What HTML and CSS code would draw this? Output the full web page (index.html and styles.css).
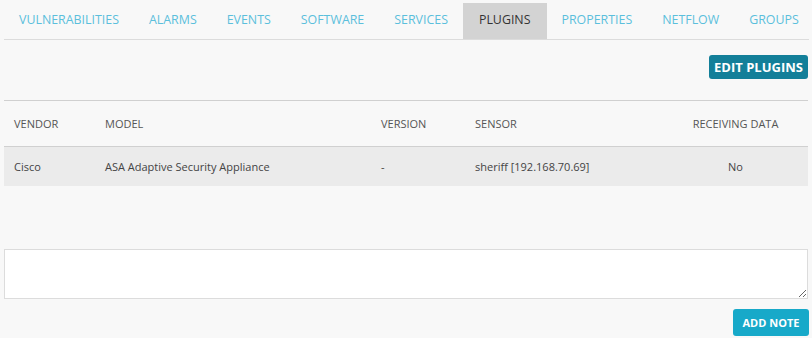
FILE: index.html
```html
<!DOCTYPE html>
<html lang="en">
<head>
    <meta charset="UTF-8">
    <title>Asset | Plugins</title>
    <link rel="stylesheet" href="styles.css">
</head>
<body>
    <nav class="tabs">
        <a href="#">Vulnerabilities</a>
        <a href="#">Alarms</a>
        <a href="#">Events</a>
        <a href="#">Software</a>
        <a href="#">Services</a>
        <a href="#" class="active">Plugins</a>
        <a href="#">Properties</a>
        <a href="#">Netflow</a>
        <a href="#">Groups</a>
    </nav>

    <div class="toolbar">
        <button class="btn btn-dark">Edit Plugins</button>
    </div>

    <table class="plugins">
        <thead>
            <tr>
                <th class="col-vendor">Vendor</th>
                <th class="col-model">Model</th>
                <th class="col-version">Version</th>
                <th class="col-sensor">Sensor</th>
                <th class="col-receiving">Receiving Data</th>
            </tr>
        </thead>
        <tbody>
            <tr>
                <td>Cisco</td>
                <td>ASA Adaptive Security Appliance</td>
                <td>-</td>
                <td>sheriff [192.168.70.69]</td>
                <td class="center">No</td>
            </tr>
        </tbody>
    </table>

    <div class="notes">
        <textarea class="note-input"></textarea>
        <div class="notes-actions">
            <button class="btn btn-light">Add Note</button>
        </div>
    </div>
</body>
</html>
```

FILE: styles.css
```css
:root {
    --link-color: #5bbfdc;
    --text-color: #444;
    --head-color: #555;
    --border-color: #dcdcdc;
    --background-color: #f8f8f8;
    --row-background: #ebebeb;
    --btn-dark: #137f99;
    --btn-light: #17a9c9;
}

* {
    margin: 0;
    padding: 0;
    box-sizing: border-box;
}

body {
    font-family: 'Open Sans', sans-serif;
    color: var(--text-color);
    background-color: var(--background-color);
    padding: 0 3px 0 4px;
}

.tabs {
    display: flex;
    padding-top: 3px;
    border-bottom: 1px solid var(--border-color);
}

.tabs a {
    display: block;
    padding: 0 15px;
    height: 36px;
    line-height: 34px;
    font-size: 12.4px;
    color: var(--link-color);
    text-decoration: none;
    text-transform: uppercase;
}

.tabs a.active {
    background-color: #d3d3d3;
    color: #333;
    padding: 0 16px;
}

.toolbar {
    display: flex;
    justify-content: flex-end;
    padding: 15px 1px 21px 0;
}

.btn {
    border: none;
    border-radius: 3px;
    color: white;
    font-family: 'Open Sans', sans-serif;
    font-weight: 700;
    text-transform: uppercase;
    cursor: pointer;
}

.btn-dark {
    background-color: var(--btn-dark);
    font-size: 13px;
    height: 24px;
    padding: 0 5px;
}

.btn-light {
    background-color: var(--btn-light);
    font-size: 11px;
    height: 27px;
    padding: 0 10px;
}

.plugins {
    width: calc(100% - 1px);
    border-collapse: collapse;
    font-size: 11px;
    border-top: 1px solid #d0d0d0;
}

.plugins th {
    text-align: left;
    font-weight: 400;
    text-transform: uppercase;
    color: var(--head-color);
    height: 46px;
    padding: 0 10px;
    border-bottom: 1px solid #d0d0d0;
}

.plugins td {
    height: 39px;
    padding: 0 10px;
    background-color: var(--row-background);
}

.plugins th.col-receiving,
.plugins td.center {
    text-align: center;
}

.col-vendor { width: 91px; }
.col-model { width: 276px; }
.col-version { width: 94px; }
.col-sensor { width: 198px; }

.notes {
    margin-top: 63px;
}

.note-input {
    display: block;
    width: calc(100% - 1px);
    height: 50px;
    border: 1px solid var(--border-color);
    background-color: white;
    resize: vertical;
    font-family: 'Open Sans', sans-serif;
}

.notes-actions {
    display: flex;
    justify-content: flex-end;
    padding: 10px 0 0 0;
}

.notes-actions .btn-light {
    width: 76px;
    padding: 0;
}
```
